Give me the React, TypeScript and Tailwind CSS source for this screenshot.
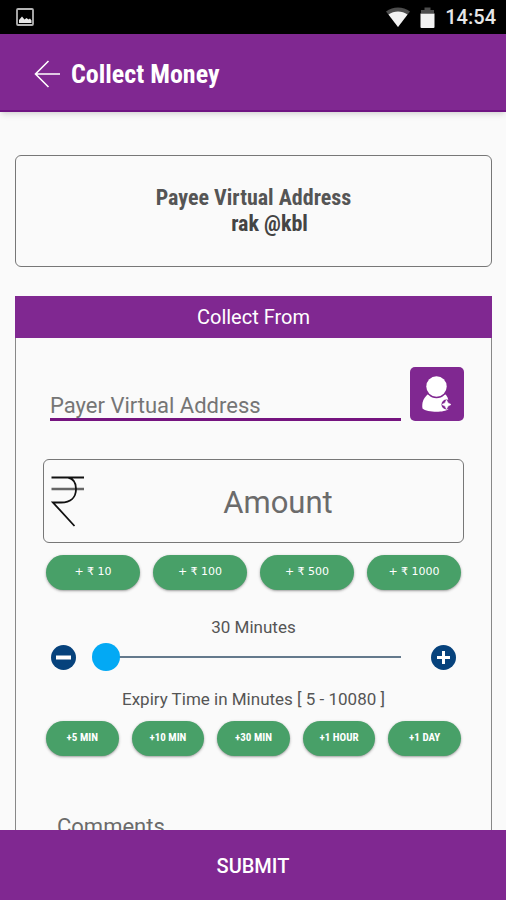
import React, { useState } from 'react';

const amountOptions = [10, 100, 500, 1000];

const expiryOptions = [
  { label: '+5 MIN', minutes: 5 },
  { label: '+10 MIN', minutes: 10 },
  { label: '+30 MIN', minutes: 30 },
  { label: '+1 HOUR', minutes: 60 },
  { label: '+1 DAY', minutes: 1440 },
];

const MIN_EXPIRY = 5;
const MAX_EXPIRY = 10080;

const StatusBar: React.FC = () => (
  <div className="flex h-[34px] shrink-0 items-center justify-between bg-black pl-4 pr-[10px] text-[#e6e6e6]">
    <svg width="18" height="18" viewBox="0 0 18 18" aria-hidden="true">
      <rect x="1" y="1" width="16" height="16" rx="1" fill="none" stroke="#b5b5b5" strokeWidth="1.8" />
      <path d="M3 15v-3l3-3.5 2.5 3 2-1.5 2 1.5 1.5-1 1.5 2V15z" fill="#e8e8e8" />
    </svg>
    <div className="flex items-center">
      <svg width="24" height="20" viewBox="0 0 24 20" aria-hidden="true">
        <path d="M0 4.5C7 -1 17 -1 24 4.5L12 20z" fill="#4d4d4d" />
        <path d="M2.500 7.500C8 3.500 16 3.500 21.500 7.500L12 20z" fill="#f2f2f2" />
      </svg>
      <svg className="ml-[10px]" width="15" height="21" viewBox="0 0 15 21" aria-hidden="true">
        <path d="M1 6V3h3.500V0.500h6V3H14v3z" fill="#4d4d4d" />
        <path d="M0.500 6.500h14V20a1 1 0 0 1-1 1h-12a1 1 0 0 1-1-1z" fill="#f2f2f2" />
      </svg>
      <span className="ml-[10px] text-xl font-medium leading-6">14:54</span>
    </div>
  </div>
);

const RupeeIcon: React.FC = () => (
  <svg width="34" height="52" viewBox="0 0 34 52" fill="none" aria-hidden="true">
    <path d="M0.500 14H33" stroke="#666" strokeWidth="2.500" />
    <path d="M0.500 2.500H33M17 2.500C22 3.500 25 8 25 14C25 22 20 27.500 10 27.500H2L23.500 51" stroke="#111" strokeWidth="1.800" />
  </svg>
);

const AddContactIcon: React.FC = () => (
  <svg width="54" height="54" viewBox="0 0 54 54" aria-hidden="true">
    <path d="M17.500 27.500C13.500 31 11.500 36 12.500 41.500C17 45.500 34 46 38.500 42V34C38 31 37 29 35.500 27.500z" fill="#fff" />
    <circle cx="26.500" cy="20" r="11.200" fill="#802891" />
    <circle cx="26.500" cy="19.500" r="10.200" fill="#fff" />
    <circle cx="36.500" cy="37.500" r="5" fill="#802891" />
    <path d="M36.500 33L38 36L41 37.500L38 39L36.500 42L35 39L32 37.500L35 36z" fill="#fff" stroke="#fff" strokeWidth="0.600" />
  </svg>
);

const App: React.FC = () => {
  const [payer, setPayer] = useState('');
  const [amount, setAmount] = useState('');
  const [expiry, setExpiry] = useState(30);
  const [comments, setComments] = useState('');

  const changeExpiry = (minutes: number) => {
    setExpiry((prev) => Math.min(MAX_EXPIRY, Math.max(MIN_EXPIRY, prev + minutes)));
  };

  const handleSubmit = (e: React.FormEvent) => {
    e.preventDefault();
    console.log('Collect request:', { payer, amount, expiry, comments });
  };

  return (
    <div className="flex h-screen flex-col bg-[#fafafa] font-[Roboto,sans-serif]">
      <StatusBar />
      <header className="z-10 flex h-[78px] shrink-0 items-center gap-[10px] border-b-2 border-[#6f1482] bg-[#802891] pl-[34px] pt-1 text-white shadow-md">
        <button type="button" aria-label="Back">
          <svg width="27" height="28" viewBox="0 0 27 28" fill="none" stroke="#fff" strokeWidth="1.600" aria-hidden="true">
            <path d="M14.500 1L1.500 14L14.500 27M1.500 14H26" />
          </svg>
        </button>
        <h1 className="font-['Roboto_Condensed',sans-serif] text-[26px] font-bold leading-8">Collect Money</h1>
      </header>

      <form id="collect" onSubmit={handleSubmit} className="min-h-0 flex-1 overflow-hidden pl-[15px] pr-[14px] pt-[43px]">
        <section className="flex h-[112px] flex-col items-center justify-center rounded-md border border-[#777] font-['Roboto_Condensed',sans-serif] text-[22px] font-bold leading-[26px] text-[#555]">
          <h2>Payee Virtual Address</h2>
          <p className="pl-8 text-[#444]">rak @kbl</p>
        </section>

        <section className="mt-[29px]">
          <h2 className="flex h-[42px] items-center justify-center bg-[#802891] text-xl text-white">Collect From</h2>
          <div className="border-x border-[#888] px-[27px] pb-6 pt-[29px]">
            <div className="flex items-end gap-[9px] pl-[7px]">
              <input
                type="text"
                aria-label="Payer Virtual Address"
                placeholder="Payer Virtual Address"
                value={payer}
                onChange={(e) => setPayer(e.target.value)}
                className="h-9 min-w-0 flex-1 border-b-3 border-[#75147f] pt-2 text-[22px] text-[#444] outline-none placeholder:text-[#757575]"
              />
              <button type="button" aria-label="Add contact" className="rounded-[5px] bg-[#802891]">
                <AddContactIcon />
              </button>
            </div>

            <div className="mt-[38px] flex h-[84px] items-center rounded-md border border-[#777] pl-[7px]">
              <RupeeIcon />
              <input
                type="text"
                inputMode="numeric"
                aria-label="Amount"
                placeholder="Amount"
                value={amount}
                onChange={(e) => setAmount(e.target.value)}
                className="min-w-0 flex-1 pl-2 pt-1 text-center text-[31px] text-[#444] outline-none placeholder:text-[#6b6b6b]"
              />
            </div>

            <div className="mt-3 grid grid-cols-4 gap-[13px] px-[3px]">
              {amountOptions.map((option) => (
                <button
                  key={option}
                  type="button"
                  onClick={() => setAmount(String(Number(amount) + option))}
                  className="h-[35px] rounded-full bg-[#48a068] font-['DejaVu_Sans',sans-serif] text-[11px] text-white shadow-sm shadow-black/30"
                >
                  + ₹ {option}
                </button>
              ))}
            </div>

            <p className="mt-[25px] text-center text-[17px] leading-6 text-[#555]">{expiry} Minutes</p>
            <div className="mt-[2px] flex h-8 items-center px-2">
              <button type="button" aria-label="Less time" onClick={() => changeExpiry(-5)}>
                <svg width="25" height="25" viewBox="0 0 25 25" aria-hidden="true">
                  <circle cx="12.500" cy="12.500" r="12.500" fill="#06427c" />
                  <path d="M5 12.500h15" stroke="#fff" strokeWidth="4" />
                </svg>
              </button>
              <input
                type="range"
                aria-label="Expiry time in minutes"
                min={MIN_EXPIRY}
                max={MAX_EXPIRY}
                step={5}
                value={expiry}
                onChange={(e) => setExpiry(Number(e.target.value))}
                className="ml-[15px] mr-[30px] h-7 min-w-0 flex-1 appearance-none bg-transparent [&::-webkit-slider-runnable-track]:h-[2px] [&::-webkit-slider-runnable-track]:bg-[linear-gradient(to_right,transparent_14px,#64798c_14px)] [&::-webkit-slider-thumb]:-mt-[13px] [&::-webkit-slider-thumb]:size-7 [&::-webkit-slider-thumb]:appearance-none [&::-webkit-slider-thumb]:rounded-full [&::-webkit-slider-thumb]:bg-[#03a9f4]"
              />
              <button type="button" aria-label="More time" onClick={() => changeExpiry(5)}>
                <svg width="25" height="25" viewBox="0 0 25 25" aria-hidden="true">
                  <circle cx="12.500" cy="12.500" r="12.500" fill="#06427c" />
                  <path d="M6 12.500h13M12.500 6v13" stroke="#fff" strokeWidth="3" />
                </svg>
              </button>
            </div>
            <p className="mt-[14px] text-center text-[17px] leading-6 text-[#555]">Expiry Time in Minutes [ 5 - 10080 ]</p>

            <div className="mt-[10px] grid grid-cols-5 gap-[13px] px-[3px]">
              {expiryOptions.map((option) => (
                <button
                  key={option.label}
                  type="button"
                  onClick={() => changeExpiry(option.minutes)}
                  className="h-[35px] rounded-full bg-[#48a068] font-['Roboto_Condensed',sans-serif] text-[11px] font-bold text-white shadow-sm shadow-black/30"
                >
                  {option.label}
                </button>
              ))}
            </div>

            <input
              type="text"
              aria-label="Comments"
              placeholder="Comments"
              value={comments}
              onChange={(e) => setComments(e.target.value)}
              className="mt-[52px] h-9 w-full px-[14px] text-[22px] text-[#444] outline-none placeholder:text-[#6b6b6b]"
            />
          </div>
        </section>
      </form>

      <button type="submit" form="collect" className="h-[70px] shrink-0 bg-[#802891] pt-[2px] text-xl font-medium text-white">
        SUBMIT
      </button>
    </div>
  );
};

export default App;
